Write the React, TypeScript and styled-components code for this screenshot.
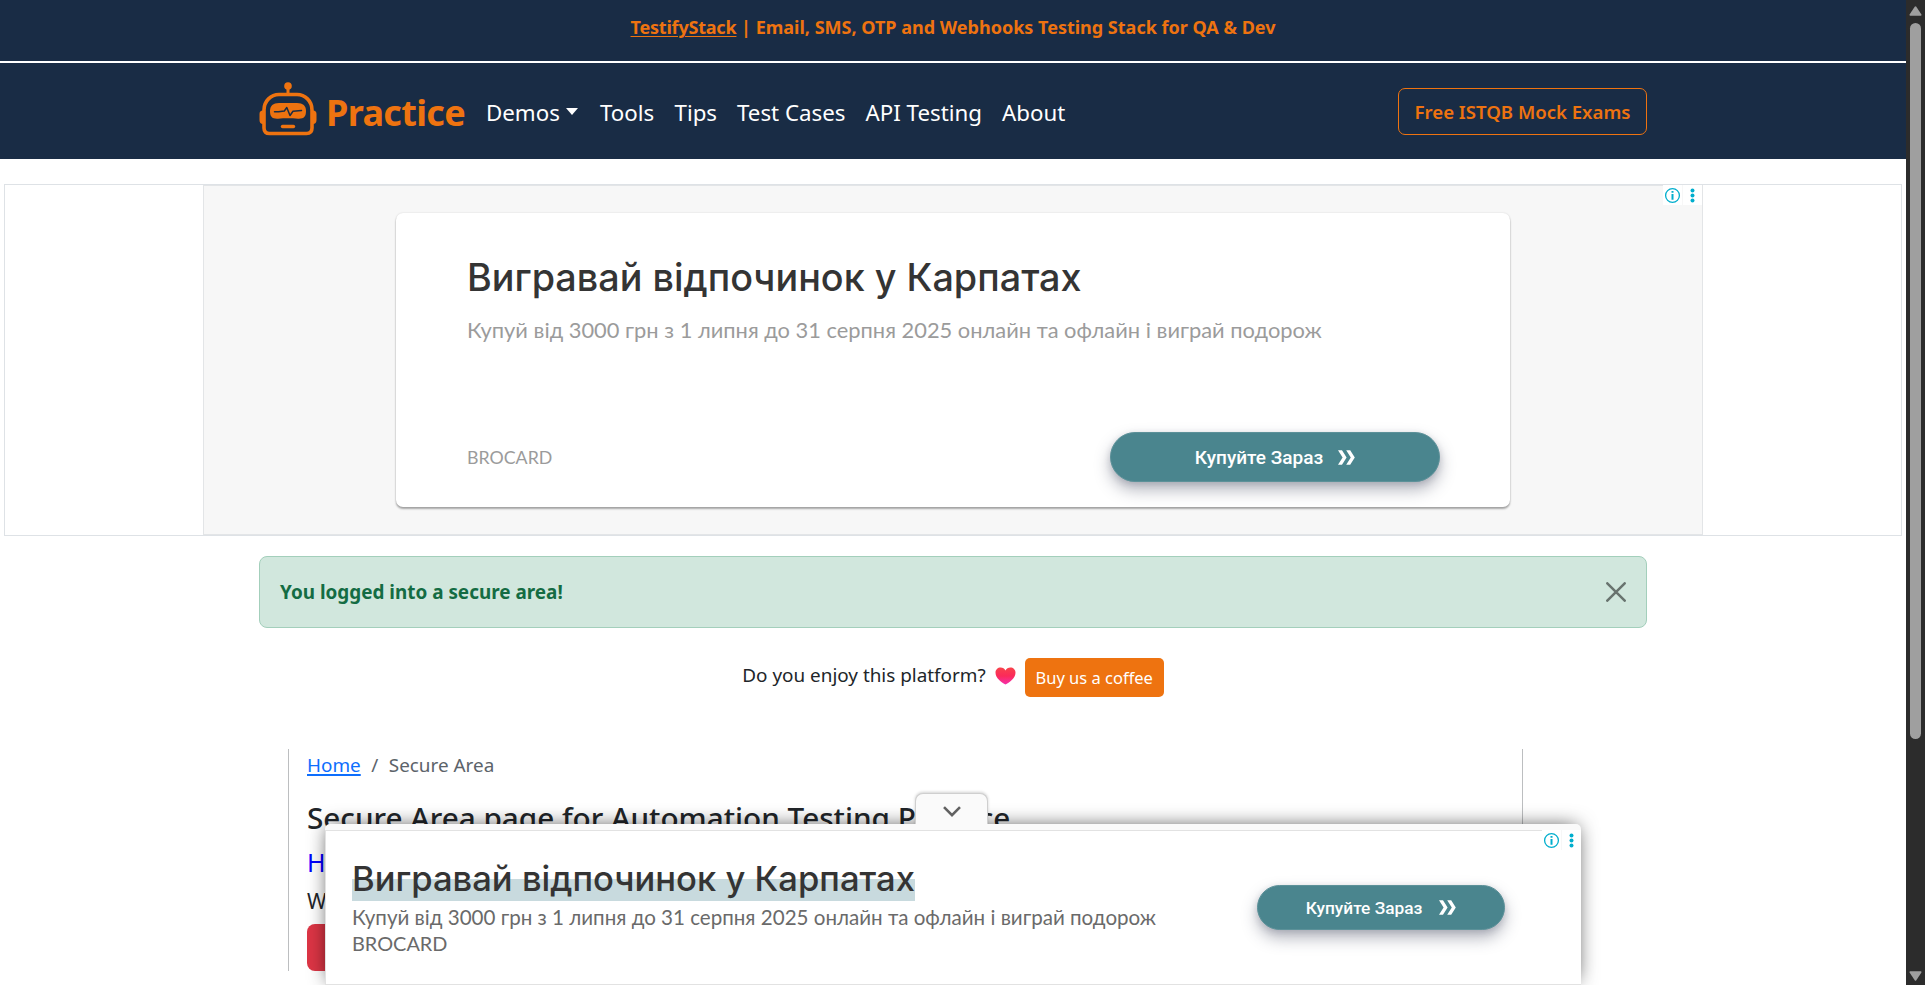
import React from "react";
import styled, { createGlobalStyle } from "styled-components";

const ui = `"Noto Sans", "Open Sans", sans-serif`;
const adText = `Lato, "Open Sans", sans-serif`;
const adTitle = `Inter, Lato, sans-serif`;
const navy = "#192c45";
const orange = "#ee7310";
const teal = "#4a858e";

const GlobalStyle = createGlobalStyle`
  * { box-sizing: border-box; }
  body { margin: 0; background: #fff; overflow: hidden; font-family: ${ui}; color: #212529; }
  h1, h2, p { margin: 0; }
  button { font-family: inherit; cursor: pointer; }
`;

const Shell = styled.div`
  position: relative;
  display: flex;
  height: 985px;
  overflow: hidden;
`;

const Page = styled.div`
  flex: 1;
  min-width: 0;
`;

const Banner = styled.div`
  height: 63px;
  padding-top: 12px;
  border-bottom: 2px solid #fff;
  background: ${navy};
  color: ${orange};
  font-size: 18px;
  font-weight: 700;
  line-height: 30px;
  text-align: center;
  a { color: inherit; letter-spacing: -0.2px; text-underline-offset: 2px; text-decoration-thickness: 1px; }
`;

const NavBar = styled.nav`
  height: 96px;
  padding-top: 1px;
  background: ${navy};
`;

const NavInner = styled.div`
  display: flex;
  align-items: center;
  width: 1388px;
  height: 100%;
  margin: 0 auto;
`;

const Brand = styled.a`
  display: flex;
  align-items: center;
  width: 227px;
  margin-top: 2px;
  color: ${orange};
  font-size: 36px;
  font-weight: 700;
  letter-spacing: -0.65px;
  svg { margin: -7px 9px 0 0; flex: none; }
`;

const NavLink = styled.a<{ $width?: number }>`
  display: flex;
  align-items: center;
  width: ${(p) => (p.$width ? `${p.$width}px` : "auto")};
  margin: 2px 20px 0 0;
  color: #fff;
  font-size: 22.3px;
  line-height: 30px;
  white-space: nowrap;
`;

const Caret = styled.span`
  margin: -3px 0 0 6px;
  border: 6.5px solid transparent;
  border-top: 7px solid #fff;
  border-bottom: 0;
`;

const ExamButton = styled.button`
  width: 249px;
  height: 47px;
  margin-left: auto;
  padding: 0;
  border: 1px solid ${orange};
  border-radius: 7px;
  background: transparent;
  color: ${orange};
  font-size: 18.6px;
  font-weight: 600;
`;

const AdSlot = styled.section`
  display: flex;
  justify-content: center;
  height: 352px;
  margin: 25px 4px 0;
  border: 1px solid #dee2e6;
`;

const AdCanvas = styled.div`
  position: relative;
  display: flex;
  justify-content: center;
  width: 1500px;
  height: 350px;
  padding-top: 27px;
  border: 1px solid #e3e5e7;
  background: #f7f7f7;
`;

const AdCard = styled.div`
  display: flex;
  flex-direction: column;
  width: 1114px;
  height: 294px;
  padding: 40px 70px 25px 71px;
  border-radius: 7px;
  background: #fff;
  box-shadow: 0 2px 2px rgba(0, 0, 0, 0.32), 0 0 2px rgba(0, 0, 0, 0.14);
`;

const AdTitle = styled.h2<{ $size: number; $line: number; $marked?: boolean }>`
  align-self: flex-start;
  color: #343434;
  font-family: ${adTitle};
  font-size: ${(p) => p.$size}px;
  font-weight: 500;
  line-height: ${(p) => p.$line}px;
  white-space: nowrap;
  background: ${(p) => (p.$marked ? "linear-gradient(transparent 52%, #c8dade 52%)" : "none")};
`;

const AdCopy = styled.p<{ $size: number; $line: number; $color: string; $gap?: number }>`
  margin-top: ${(p) => p.$gap ?? 0}px;
  color: ${(p) => p.$color};
  font-family: ${adText};
  font-size: ${(p) => p.$size}px;
  line-height: ${(p) => p.$line}px;
  white-space: nowrap;
`;

const AdFooter = styled.div`
  display: flex;
  align-items: center;
  justify-content: space-between;
  margin-top: auto;
`;

const CtaButton = styled.button<{ $w: number; $h: number; $size: number; $gap: number }>`
  display: flex;
  align-items: center;
  justify-content: center;
  gap: ${(p) => p.$gap}px;
  width: ${(p) => p.$w}px;
  height: ${(p) => p.$h}px;
  padding: 0;
  border: 1px solid #5c9199;
  border-radius: 25px;
  background: ${teal};
  box-shadow: 0 8px 16px rgba(50, 55, 80, 0.36), 0 2px 6px rgba(50, 55, 80, 0.16);
  color: #fff;
  font-family: Roboto, sans-serif;
  font-size: ${(p) => p.$size}px;
  font-weight: 500;
  white-space: nowrap;
`;

const AdChoices = styled.div<{ $top: number; $right: number }>`
  position: absolute;
  top: ${(p) => p.$top}px;
  right: ${(p) => p.$right}px;
  display: flex;
  gap: 1px;
  background: #f7f7f7;
  svg { display: block; background: #fff; }
`;

const Container = styled.main`
  width: 1388px;
  margin: 20px auto 0;
`;

const Alert = styled.div`
  display: flex;
  align-items: center;
  justify-content: space-between;
  height: 72px;
  padding: 0 20px 0 20px;
  border: 1px solid #a3cfbb;
  border-radius: 8px;
  background: #d1e7dd;
  color: #146c43;
  font-size: 18.9px;
  font-weight: 700;
`;

const SupportRow = styled.div`
  display: flex;
  justify-content: center;
  height: 39px;
  margin-top: 30px;
  font-size: 18.9px;
  line-height: 34px;
  svg { margin: 9px 9px 0 9px; }
`;

const CoffeeButton = styled.button`
  width: 139px;
  height: 39px;
  padding: 0 0 1px;
  border: 0;
  border-radius: 5px;
  background: ${orange};
  color: #fff;
  font-size: 16.5px;
`;

const Content = styled.section`
  width: 1235px;
  height: 222px;
  margin: 52px 0 0 29px;
  padding: 1px 0 0 18px;
  border: solid #bcbec0;
  border-width: 0 1px;
`;

const Breadcrumb = styled.div`
  display: flex;
  gap: 10.5px;
  height: 30px;
  color: #5c636a;
  font-size: 18.9px;
  line-height: 30px;
  a { color: #0d6efd; text-underline-offset: 2px; text-decoration-thickness: 2px; }
`;

const Heading = styled.h1`
  margin-top: 20px;
  font-size: 29.7px;
  font-weight: 500;
  line-height: 36px;
  white-space: nowrap;
`;

const Greeting = styled.p`
  margin-top: 11px;
  color: #00f;
  font-size: 25px;
  line-height: 30px;
`;

const Welcome = styled.p`
  margin-top: 9px;
  font-size: 21px;
  line-height: 30px;
`;

const LogoutButton = styled.button`
  display: block;
  width: 122px;
  height: 47px;
  margin-top: 8px;
  border: 0;
  border-radius: 8px;
  background: #dc3545;
`;

const AnchorAd = styled.aside`
  position: absolute;
  left: 325px;
  bottom: 0;
  width: 1256px;
  height: 161px;
  padding-top: 6px;
  border-radius: 5px 5px 0 0;
  background: #fafafa;
  box-shadow: 0 -1px 20px -4px rgba(0, 0, 0, 0.75);
`;

const AnchorBody = styled.div`
  display: flex;
  justify-content: space-between;
  height: 155px;
  padding: 24px 76px 0 26px;
  border: 1px solid #e2e2e2;
  border-right: 0;
  background: #fff;
`;

const AnchorText = styled.div`
  display: flex;
  flex-direction: column;
`;

const AnchorAction = styled.div`
  padding-top: 30px;
`;

const CollapseTab = styled.button`
  position: absolute;
  top: -31px;
  left: 590px;
  display: flex;
  justify-content: center;
  width: 73px;
  height: 33px;
  padding: 12px 0 0;
  border: 1px solid #cfcfcf;
  border-bottom: 0;
  border-radius: 8px 8px 0 0;
  background: #fafafa;
  box-shadow: 0 -1px 3px rgba(0, 0, 0, 0.18);
  clip-path: inset(-6px -6px 2px -6px);
`;

const Scrollbar = styled.div`
  display: flex;
  flex-direction: column;
  align-items: center;
  width: 19px;
  padding: 6px 0 4px;
  background: #2c2c2c;
`;

const Thumb = styled.div`
  width: 11px;
  height: 716px;
  margin: 7px 0 auto;
  border-radius: 6px;
  background: #9f9f9f;
`;

const RobotLogo = () => (
  <svg width="58" height="54" viewBox="0 0 58 54" fill="none">
    <path d="M29 5v9" stroke={orange} strokeWidth="3" />
    <circle cx="29" cy="4" r="3.8" fill={orange} />
    <path d="M5 28C5 19 12 12.5 20 12.5h18C46 12.5 53 19 53 28v18q0 5.500-5.500 5.500h-37Q5 51.500 5 46Z" stroke={orange} strokeWidth="3.6" />
    <path d="M4 28.500C1.500 28.500.5 30 .5 32v6c0 2.500 1.200 4 3.500 4ZM54 28.500c2.500 0 3.500 1.500 3.500 3.500v6c0 2.500-1.200 4-3.500 4Z" fill={orange} />
    <path d="M20 21h18c6 0 9 2.700 9 8 0 5.500-2 8-8 7.700-7-.5-13-.5-20 0-6 .3-8-2.200-8-7.700 0-5.300 3-8 9-8Z" fill={orange} />
    <path d="M15.500 29.700h4l5.800-.7 2.500-3.500 3.200 8 3-4.300 8.500-.7" stroke={navy} strokeWidth="1.5" strokeLinecap="round" strokeLinejoin="round" />
    <path d="M23.500 44.500h11" stroke={orange} strokeWidth="3.4" strokeLinecap="round" />
  </svg>
);

const Chevrons = () => (
  <svg width="17" height="15" viewBox="0 0 17 15" fill="#fff">
    <path d="M0 .2h4l4.600 7.300L4 14.800H0l4.600-7.300ZM8.200.2h4l4.600 7.300-4.600 7.300h-4l4.600-7.300Z" />
  </svg>
);

const Choices = ({ top, right }: { top: number; right: number }) => (
  <AdChoices $top={top} $right={right}>
    <svg width="19" height="20" viewBox="0 0 19 20">
      <circle cx="9.500" cy="10.500" r="6.900" fill="none" stroke="#00aecd" strokeWidth="1.300" />
      <path d="M8.500 6h2v1.800h-2ZM8.500 9h2v5.700h-2Z" fill="#00aecd" />
    </svg>
    <svg width="19" height="20" viewBox="0 0 19 20" fill="#00aecd">
      <circle cx="9.500" cy="5.500" r="2" />
      <circle cx="9.500" cy="10.500" r="2" />
      <circle cx="9.500" cy="15.500" r="2" />
    </svg>
  </AdChoices>
);

const Heart = () => (
  <svg width="21" height="18" viewBox="0 0 21 18">
    <defs>
      <linearGradient id="heart" x1="0" y1="0" x2="0" y2="1">
        <stop offset="0" stopColor="#f8434b" />
        <stop offset=".5" stopColor="#fb2a5a" />
        <stop offset="1" stopColor="#f52fae" />
      </linearGradient>
    </defs>
    <path d="M10.500 17.500C7 15.500.5 11.500.5 5.700.5 2.500 2.800.5 5.600.5c2.200 0 4 1.200 4.900 3 .9-1.800 2.700-3 4.900-3 2.800 0 5.100 2 5.100 5.200 0 5.800-6.500 9.800-10 11.800Z" fill="url(#heart)" />
  </svg>
);

const CloseIcon = () => (
  <svg width="20" height="20" viewBox="0 0 20 20" stroke="#68736e" strokeWidth="2.500" strokeLinecap="round">
    <path d="M1.300 1.300l17.400 17.400M18.700 1.300L1.300 18.700" />
  </svg>
);

const CollapseIcon = () => (
  <svg width="18" height="12" viewBox="0 0 18 12" fill="none" stroke="#616161" strokeWidth="2.600">
    <path d="M1 1.200l8 8 8-8" />
  </svg>
);

const Arrow = ({ down }: { down?: boolean }) => (
  <svg width="13" height="10" viewBox="0 0 13 10" fill="#9f9f9f">
    <path d={down ? "M1.200.3h10.600q1 .4.500 1.400L7.300 9.300q-.8 1-1.600 0L.7 1.700Q.2.700 1.200.3Z" : "M1.200 9.700h10.600q1-.4.500-1.400L7.300.7q-.8-1-1.600 0L.7 8.300q-.5 1 .5 1.400Z"} />
  </svg>
);

const AD_TITLE = "Вигравай відпочинок у Карпатах";
const AD_COPY = "Купуй від 3000 грн з 1 липня до 31 серпня 2025 онлайн та офлайн і виграй подорож";

export default function App() {
  return (
    <>
      <GlobalStyle />
      <Shell>
        <Page>
          <Banner>
            <a href="#stack">TestifyStack</a> | Email, SMS, OTP and Webhooks Testing Stack for QA &amp; Dev
          </Banner>
          <NavBar>
            <NavInner>
              <Brand>
                <RobotLogo />
                Practice
              </Brand>
              <NavLink $width={94}>
                Demos
                <Caret />
              </NavLink>
              <NavLink $width={54.5}>Tools</NavLink>
              <NavLink $width={42.5}>Tips</NavLink>
              <NavLink $width={108.5}>Test Cases</NavLink>
              <NavLink $width={116.5}>API Testing</NavLink>
              <NavLink>About</NavLink>
              <ExamButton>Free ISTQB Mock Exams</ExamButton>
            </NavInner>
          </NavBar>

          <AdSlot>
            <AdCanvas>
              <AdCard>
                <AdTitle $size={37.75} $line={48}>{AD_TITLE}</AdTitle>
                <AdCopy $size={21.87} $line={30} $color="#9b9b9b" $gap={14}>{AD_COPY}</AdCopy>
                <AdFooter>
                  <AdCopy $size={17.8} $line={26} $color="#9b9b9b">BROCARD</AdCopy>
                  <CtaButton $w={330} $h={50} $size={19} $gap={15}>
                    Купуйте Зараз
                    <Chevrons />
                  </CtaButton>
                </AdFooter>
              </AdCard>
              <Choices top={-1} right={0} />
            </AdCanvas>
          </AdSlot>

          <Container>
            <Alert>
              You logged into a secure area!
              <CloseIcon />
            </Alert>
            <SupportRow>
              Do you enjoy this platform?
              <Heart />
              <CoffeeButton>Buy us a coffee</CoffeeButton>
            </SupportRow>
            <Content>
              <Breadcrumb>
                <a href="#home">Home</a>
                <span>/</span>
                <span>Secure Area</span>
              </Breadcrumb>
              <Heading>Secure Area page for Automation Testing Practice</Heading>
              <Greeting>Hi</Greeting>
              <Welcome>We</Welcome>
              <LogoutButton />
            </Content>
          </Container>
        </Page>

        <Scrollbar>
          <Arrow />
          <Thumb />
          <Arrow down />
        </Scrollbar>

        <AnchorAd>
          <CollapseTab>
            <CollapseIcon />
          </CollapseTab>
          <AnchorBody>
            <AnchorText>
              <AdTitle $size={34.6} $line={46} $marked>{AD_TITLE}</AdTitle>
              <AdCopy $size={20.57} $line={26} $color="#6a6a6a" $gap={3}>{AD_COPY}</AdCopy>
              <AdCopy $size={19.9} $line={26} $color="#6a6a6a">BROCARD</AdCopy>
            </AnchorText>
            <AnchorAction>
              <CtaButton $w={248} $h={45} $size={17.3} $gap={17}>
                Купуйте Зараз
                <Chevrons />
              </CtaButton>
            </AnchorAction>
          </AnchorBody>
          <Choices top={6} right={0} />
        </AnchorAd>
      </Shell>
    </>
  );
}
